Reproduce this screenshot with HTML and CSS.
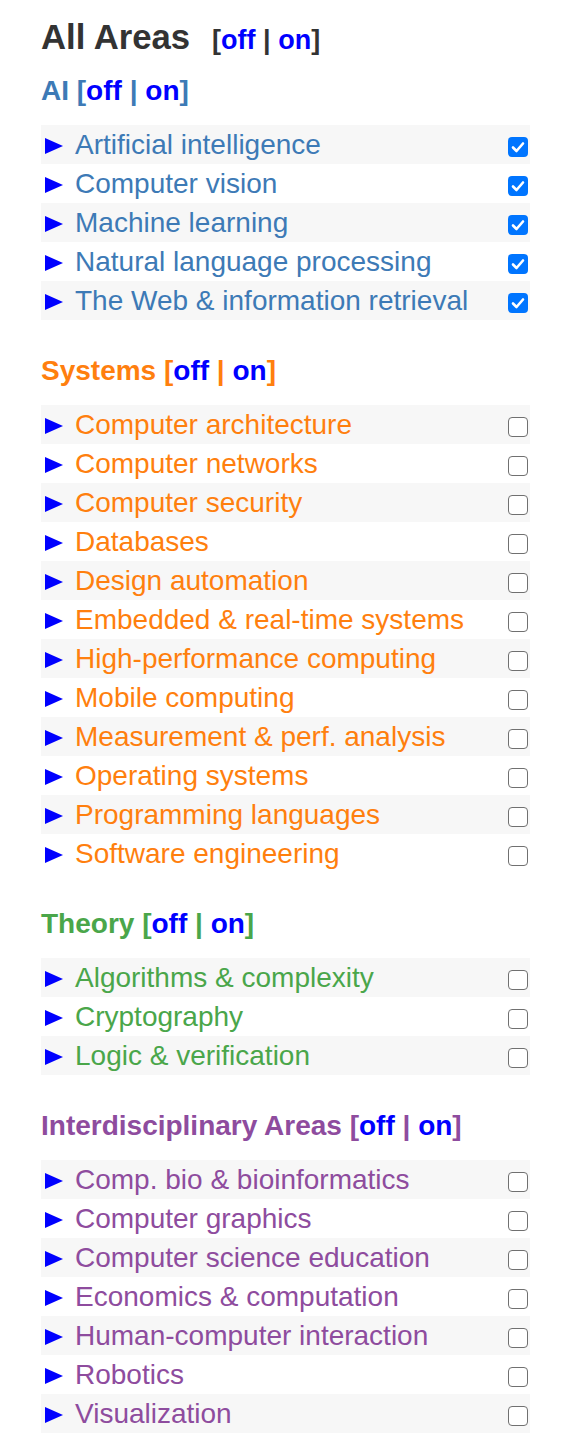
FILE: index.html
```html
<!DOCTYPE html>
<html>
<head>
<meta charset="utf-8">
<link rel="stylesheet" href="styles.css">
</head>
<body>
<div class="page">
  <div class="title">All Areas<span class="toggle">[<a class="lnk">off</a> | <a class="lnk">on</a>]</span></div>

  <section class="area ai">
    <div class="head">AI [<a class="lnk">off</a> | <a class="lnk">on</a>]</div>
    <div class="rows">
      <div class="row"><svg class="tri" viewBox="0 0 18 16"><polygon points="0,0 18,8 0,16"/></svg><span class="lbl">Artificial intelligence</span><span class="cb on"><svg viewBox="0 0 20 20"><path d="M5 10.5 L8.5 14 L15 6.5"/></svg></span></div>
      <div class="row"><svg class="tri" viewBox="0 0 18 16"><polygon points="0,0 18,8 0,16"/></svg><span class="lbl">Computer vision</span><span class="cb on"><svg viewBox="0 0 20 20"><path d="M5 10.5 L8.5 14 L15 6.5"/></svg></span></div>
      <div class="row"><svg class="tri" viewBox="0 0 18 16"><polygon points="0,0 18,8 0,16"/></svg><span class="lbl">Machine learning</span><span class="cb on"><svg viewBox="0 0 20 20"><path d="M5 10.5 L8.5 14 L15 6.5"/></svg></span></div>
      <div class="row"><svg class="tri" viewBox="0 0 18 16"><polygon points="0,0 18,8 0,16"/></svg><span class="lbl">Natural language processing</span><span class="cb on"><svg viewBox="0 0 20 20"><path d="M5 10.5 L8.5 14 L15 6.5"/></svg></span></div>
      <div class="row"><svg class="tri" viewBox="0 0 18 16"><polygon points="0,0 18,8 0,16"/></svg><span class="lbl">The Web &amp; information retrieval</span><span class="cb on"><svg viewBox="0 0 20 20"><path d="M5 10.5 L8.5 14 L15 6.5"/></svg></span></div>
    </div>
  </section>

  <section class="area sys">
    <div class="head">Systems [<a class="lnk">off</a> | <a class="lnk">on</a>]</div>
    <div class="rows">
      <div class="row"><svg class="tri" viewBox="0 0 18 16"><polygon points="0,0 18,8 0,16"/></svg><span class="lbl">Computer architecture</span><span class="cb"></span></div>
      <div class="row"><svg class="tri" viewBox="0 0 18 16"><polygon points="0,0 18,8 0,16"/></svg><span class="lbl">Computer networks</span><span class="cb"></span></div>
      <div class="row"><svg class="tri" viewBox="0 0 18 16"><polygon points="0,0 18,8 0,16"/></svg><span class="lbl">Computer security</span><span class="cb"></span></div>
      <div class="row"><svg class="tri" viewBox="0 0 18 16"><polygon points="0,0 18,8 0,16"/></svg><span class="lbl">Databases</span><span class="cb"></span></div>
      <div class="row"><svg class="tri" viewBox="0 0 18 16"><polygon points="0,0 18,8 0,16"/></svg><span class="lbl">Design automation</span><span class="cb"></span></div>
      <div class="row"><svg class="tri" viewBox="0 0 18 16"><polygon points="0,0 18,8 0,16"/></svg><span class="lbl">Embedded &amp; real-time systems</span><span class="cb"></span></div>
      <div class="row"><svg class="tri" viewBox="0 0 18 16"><polygon points="0,0 18,8 0,16"/></svg><span class="lbl">High-performance computing</span><span class="cb"></span></div>
      <div class="row"><svg class="tri" viewBox="0 0 18 16"><polygon points="0,0 18,8 0,16"/></svg><span class="lbl">Mobile computing</span><span class="cb"></span></div>
      <div class="row"><svg class="tri" viewBox="0 0 18 16"><polygon points="0,0 18,8 0,16"/></svg><span class="lbl">Measurement &amp; perf. analysis</span><span class="cb"></span></div>
      <div class="row"><svg class="tri" viewBox="0 0 18 16"><polygon points="0,0 18,8 0,16"/></svg><span class="lbl">Operating systems</span><span class="cb"></span></div>
      <div class="row"><svg class="tri" viewBox="0 0 18 16"><polygon points="0,0 18,8 0,16"/></svg><span class="lbl">Programming languages</span><span class="cb"></span></div>
      <div class="row"><svg class="tri" viewBox="0 0 18 16"><polygon points="0,0 18,8 0,16"/></svg><span class="lbl">Software engineering</span><span class="cb"></span></div>
    </div>
  </section>

  <section class="area theory">
    <div class="head">Theory [<a class="lnk">off</a> | <a class="lnk">on</a>]</div>
    <div class="rows">
      <div class="row"><svg class="tri" viewBox="0 0 18 16"><polygon points="0,0 18,8 0,16"/></svg><span class="lbl">Algorithms &amp; complexity</span><span class="cb"></span></div>
      <div class="row"><svg class="tri" viewBox="0 0 18 16"><polygon points="0,0 18,8 0,16"/></svg><span class="lbl">Cryptography</span><span class="cb"></span></div>
      <div class="row"><svg class="tri" viewBox="0 0 18 16"><polygon points="0,0 18,8 0,16"/></svg><span class="lbl">Logic &amp; verification</span><span class="cb"></span></div>
    </div>
  </section>

  <section class="area inter">
    <div class="head">Interdisciplinary Areas [<a class="lnk">off</a> | <a class="lnk">on</a>]</div>
    <div class="rows">
      <div class="row"><svg class="tri" viewBox="0 0 18 16"><polygon points="0,0 18,8 0,16"/></svg><span class="lbl">Comp. bio &amp; bioinformatics</span><span class="cb"></span></div>
      <div class="row"><svg class="tri" viewBox="0 0 18 16"><polygon points="0,0 18,8 0,16"/></svg><span class="lbl">Computer graphics</span><span class="cb"></span></div>
      <div class="row"><svg class="tri" viewBox="0 0 18 16"><polygon points="0,0 18,8 0,16"/></svg><span class="lbl">Computer science education</span><span class="cb"></span></div>
      <div class="row"><svg class="tri" viewBox="0 0 18 16"><polygon points="0,0 18,8 0,16"/></svg><span class="lbl">Economics &amp; computation</span><span class="cb"></span></div>
      <div class="row"><svg class="tri" viewBox="0 0 18 16"><polygon points="0,0 18,8 0,16"/></svg><span class="lbl">Human-computer interaction</span><span class="cb"></span></div>
      <div class="row"><svg class="tri" viewBox="0 0 18 16"><polygon points="0,0 18,8 0,16"/></svg><span class="lbl">Robotics</span><span class="cb"></span></div>
      <div class="row"><svg class="tri" viewBox="0 0 18 16"><polygon points="0,0 18,8 0,16"/></svg><span class="lbl">Visualization</span><span class="cb"></span></div>
    </div>
  </section>
</div>
</body>
</html>
```

FILE: styles.css
```css
html, body {
  margin: 0;
  padding: 0;
  background: #ffffff;
}

body {
  font-family: "Liberation Sans", Arial, sans-serif;
}

.page {
  width: 489px;
  padding: 17px 0 0 41px;
}

.title {
  font-size: 34.7px;
  font-weight: bold;
  line-height: 40px;
  height: 40px;
  color: #333333;
  white-space: nowrap;
}

.toggle {
  margin-left: 22px;
  font-size: 27px;
  line-height: 0;
}

.lnk {
  color: #0000ff;
  text-decoration: none;
}

.area {
  margin-top: 31px;
}

.area.ai {
  margin-top: 14px;
}

.head {
  font-size: 28px;
  font-weight: bold;
  line-height: 40px;
  height: 40px;
  margin-bottom: 14px;
  white-space: nowrap;
}

.rows {
  display: flex;
  flex-direction: column;
}

.row {
  display: flex;
  align-items: center;
  height: 39px;
  padding-left: 4px;
  font-size: 28px;
}

.row:nth-child(odd) {
  background: #f7f7f7;
}

.tri {
  width: 18px;
  height: 16px;
  flex: none;
  fill: #0000ff;
  margin-top: 2px;
}

.lbl {
  flex: 1;
  margin-left: 12px;
  line-height: 39px;
  white-space: nowrap;
}

.cb {
  box-sizing: border-box;
  width: 20px;
  height: 20px;
  margin: 5px 2px 0 0;
  flex: none;
  border: 1.7px solid #707070;
  border-radius: 4px;
  background: #ffffff;
  display: flex;
}

.cb.on {
  border: none;
  background: #0075ff;
}

.cb svg {
  width: 20px;
  height: 20px;
  fill: none;
  stroke: #ffffff;
  stroke-width: 2.6;
  stroke-linecap: round;
  stroke-linejoin: round;
}

.ai { color: #3d7ab6; }
.sys { color: #ff7f0e; }
.theory { color: #4aa64a; }
.inter { color: #8e4c9e; }
```
